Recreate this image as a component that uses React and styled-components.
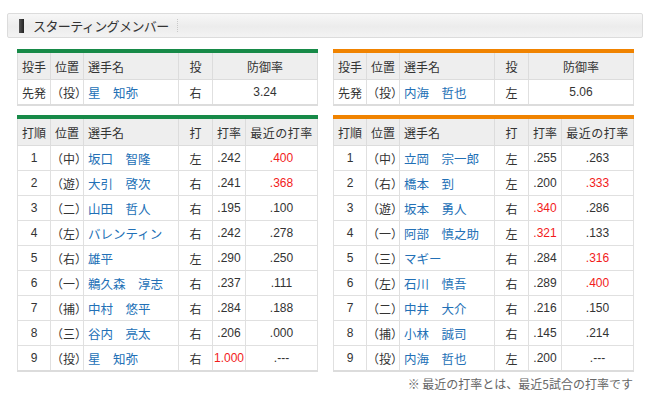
import React from 'react';
import styled, { createGlobalStyle } from 'styled-components';

const GlobalStyle = createGlobalStyle`
  body {
    margin: 0;
    background: #fff;
    font-family: "Liberation Sans", "Noto Sans CJK JP", sans-serif;
    color: #333;
  }
`

// Page
const Page = styled.div`
  width: 650px;
  padding: 13px 7px 0;
  box-sizing: border-box;
`

// Title bar
const TitleBar = styled.div`
  height: 25px;
  box-sizing: border-box;
  border: 1px solid #dcdcdc;
  border-radius: 2px;
  background: linear-gradient(#f7f7f7, #ececec 55%, #f3f3f3);
  display: flex;
  align-items: center;
  padding-left: 11px;
`
const TitleMark = styled.span`
  width: 5px;
  height: 14px;
  background: linear-gradient(90deg, #555, #222);
  margin-right: 9px;
`
const TitleText = styled.h2`
  margin: 0;
  font-size: 13px;
  font-weight: normal;
  letter-spacing: -0.6px;
  color: #333;
  font-family: "Noto Sans CJK JP", sans-serif;
`
const TitleDots = styled.span`
  width: 0;
  height: 13px;
  margin-left: 8px;
  border-left: 1px dotted #c8c8c8;
`

// Tables area
const Grid = styled.div`
  display: grid;
  grid-template-columns: 301px 301px;
  column-gap: 15px;
  row-gap: 9px;
  padding: 11px 10px 0;
`
const Table = styled.table`
  width: 301px;
  table-layout: fixed;
  border-collapse: collapse;
  border-top: 4px solid ${p => p.$accent};
  border-bottom: 2px solid #dcdcdc;
  font-size: 12px;
  font-family: "Noto Sans CJK JP", sans-serif;
`
const Th = styled.th`
  height: 26px;
  padding: 0;
  background: #eeeeee;
  border: 1px solid #dcdcdc;
  font-weight: normal;
  color: #333;
  text-align: ${p => p.$left ? 'left' : 'center'};
  padding-left: ${p => p.$left ? '4px' : '0'};
  letter-spacing: ${p => p.$wide ? '0.5px' : '0'};
`
const Td = styled.td`
  height: 24px;
  padding: 0;
  border: 1px solid #e0e0e0;
  color: ${p => p.$red ? '#f21b1b' : '#333'};
  text-align: center;
  font-family: ${p => p.$num ? '"Liberation Sans", sans-serif' : '"Noto Sans CJK JP", sans-serif'};
  font-size: 12px;
`
const NameTd = styled(Td)`
  text-align: left;
  padding-left: 4px;
  color: #2270b6;
  font-size: 12.5px;
`
const Note = styled.p`
  margin: 3px 10px 0 0;
  text-align: right;
  font-size: 12px;
  color: #666;
  font-family: "Noto Sans CJK JP", sans-serif;
`

const GREEN = '#178a48';
const ORANGE = '#f08300';

const pitchers = [
  { accent: GREEN, name: '星　知弥', hand: '右', era: '3.24' },
  { accent: ORANGE, name: '内海　哲也', hand: '左', era: '5.06' },
];

const lineups = [
  {
    accent: GREEN,
    rows: [
      ['1', '中', '坂口　智隆', '左', '.242', '.400', false, true],
      ['2', '遊', '大引　啓次', '右', '.241', '.368', false, true],
      ['3', '二', '山田　哲人', '右', '.195', '.100'],
      ['4', '左', 'バレンティン', '右', '.242', '.278'],
      ['5', '右', '雄平', '左', '.290', '.250'],
      ['6', '一', '鵜久森　淳志', '右', '.237', '.111'],
      ['7', '捕', '中村　悠平', '右', '.284', '.188'],
      ['8', '三', '谷内　亮太', '右', '.206', '.000'],
      ['9', '投', '星　知弥', '右', '1.000', '.---', true, false],
    ],
  },
  {
    accent: ORANGE,
    rows: [
      ['1', '中', '立岡　宗一郎', '左', '.255', '.263'],
      ['2', '右', '橋本　到', '左', '.200', '.333', false, true],
      ['3', '遊', '坂本　勇人', '右', '.340', '.286', true, false],
      ['4', '一', '阿部　慎之助', '左', '.321', '.133', true, false],
      ['5', '三', 'マギー', '右', '.284', '.316', false, true],
      ['6', '左', '石川　慎吾', '右', '.289', '.400', false, true],
      ['7', '二', '中井　大介', '右', '.216', '.150'],
      ['8', '捕', '小林　誠司', '右', '.145', '.214'],
      ['9', '投', '内海　哲也', '左', '.200', '.---'],
    ],
  },
];

const PitcherTable = ({ accent, name, hand, era }) => (
  <Table $accent={accent}>
    <colgroup>
      <col style={{ width: 33 }} />
      <col style={{ width: 33 }} />
      <col style={{ width: 95 }} />
      <col style={{ width: 34 }} />
      <col />
    </colgroup>
    <thead>
      <tr>
        <Th>投手</Th>
        <Th>位置</Th>
        <Th $left>選手名</Th>
        <Th>投</Th>
        <Th>防御率</Th>
      </tr>
    </thead>
    <tbody>
      <tr>
        <Td>先発</Td>
        <Td>（投）</Td>
        <NameTd>{name}</NameTd>
        <Td>{hand}</Td>
        <Td $num>{era}</Td>
      </tr>
    </tbody>
  </Table>
);

const LineupTable = ({ accent, rows }) => (
  <Table $accent={accent}>
    <colgroup>
      <col style={{ width: 33 }} />
      <col style={{ width: 33 }} />
      <col style={{ width: 95 }} />
      <col style={{ width: 34 }} />
      <col style={{ width: 33 }} />
      <col />
    </colgroup>
    <thead>
      <tr>
        <Th>打順</Th>
        <Th>位置</Th>
        <Th $left>選手名</Th>
        <Th>打</Th>
        <Th>打率</Th>
        <Th $wide>最近の打率</Th>
      </tr>
    </thead>
    <tbody>
      {rows.map(([no, pos, name, hand, avg, recent, avgRed, recRed]) => (
        <tr key={no}>
          <Td $num>{no}</Td>
          <Td>（{pos}）</Td>
          <NameTd>{name}</NameTd>
          <Td>{hand}</Td>
          <Td $num $red={avgRed}>{avg}</Td>
          <Td $num $red={recRed}>{recent}</Td>
        </tr>
      ))}
    </tbody>
  </Table>
);

export default function App() {
  return (
    <>
      <GlobalStyle />
      <Page>
        <TitleBar>
          <TitleMark />
          <TitleText>スターティングメンバー</TitleText>
          <TitleDots />
        </TitleBar>
        <Grid>
          {pitchers.map(p => <PitcherTable key={p.name} {...p} />)}
          {lineups.map(l => <LineupTable key={l.accent} {...l} />)}
        </Grid>
        <Note>※ 最近の打率とは、最近5試合の打率です</Note>
      </Page>
    </>
  );
}
